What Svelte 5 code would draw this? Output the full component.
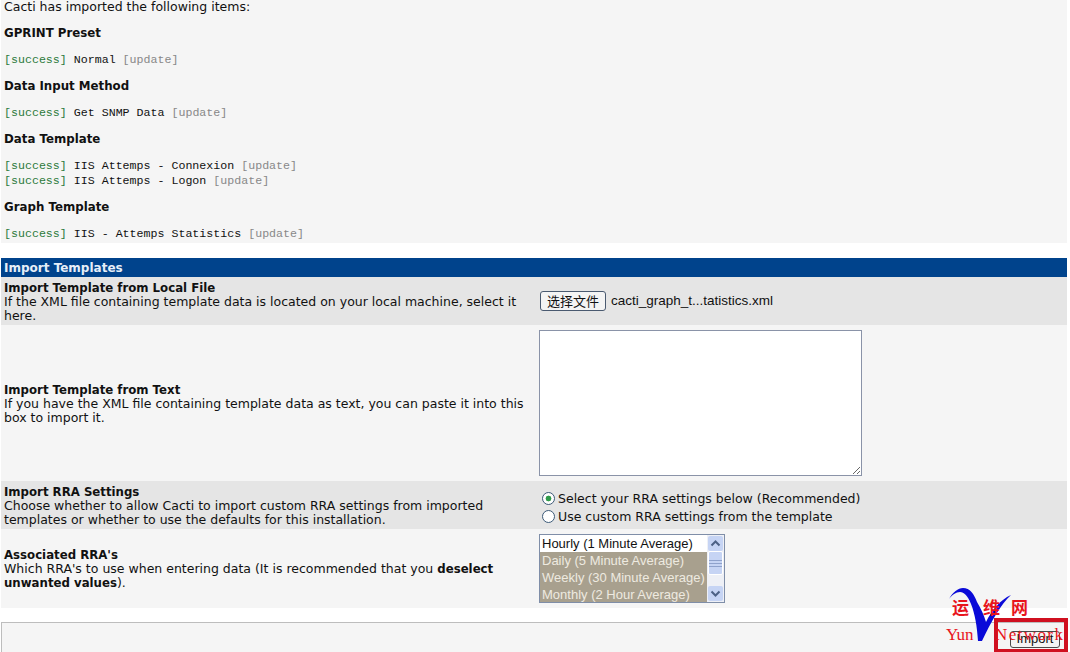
<script>
  const imported = [
    { title: 'GPRINT Preset', items: ['Normal'] },
    { title: 'Data Input Method', items: ['Get SNMP Data'] },
    { title: 'Data Template', items: ['IIS Attemps - Connexion', 'IIS Attemps - Logon'] },
    { title: 'Graph Template', items: ['IIS - Attemps Statistics'] }
  ]

  const rras = [
    { name: 'Hourly (1 Minute Average)', selected: false },
    { name: 'Daily (5 Minute Average)', selected: true },
    { name: 'Weekly (30 Minute Average)', selected: true },
    { name: 'Monthly (2 Hour Average)', selected: true }
  ]
</script>

<main class="page">
  <section class="results">
    <p class="intro">Cacti has imported the following items:</p>
    {#each imported as group}
      <h3>{group.title}</h3>
      <div class="log">
        {#each group.items as item}
          <div><span class="ok">[success]</span> {item} <span class="upd">[update]</span></div>
        {/each}
      </div>
    {/each}
  </section>

  <section class="form">
    <div class="header">Import Templates</div>

    <div class="row alt file-row">
      <div class="label shifted">
        <strong>Import Template from Local File</strong><br />
        If the XML file containing template data is located on your local machine, select it here.
      </div>
      <div class="field file">
        <button type="button" class="pick">选择文件</button>
        <span>cacti_graph_t...tatistics.xml</span>
      </div>
    </div>

    <div class="row text-row">
      <div class="label shifted">
        <strong>Import Template from Text</strong><br />
        If you have the XML file containing template data as text, you can paste it into this box to import it.
      </div>
      <div class="field">
        <textarea></textarea>
      </div>
    </div>

    <div class="row alt rra-row">
      <div class="label shifted">
        <strong>Import RRA Settings</strong><br />
        Choose whether to allow Cacti to import custom RRA settings from imported templates or whether to use the defaults for this installation.
      </div>
      <div class="field radios">
        <label><input type="radio" name="rra" checked />Select your RRA settings below (Recommended)</label>
        <label><input type="radio" name="rra" />Use custom RRA settings from the template</label>
      </div>
    </div>

    <div class="row assoc-row">
      <div class="label">
        <strong>Associated RRA's</strong><br />
        Which RRA's to use when entering data (It is recommended that you <strong>deselect unwanted values</strong>).
      </div>
      <div class="field">
        <div class="listbox">
          <div class="options">
            {#each rras as rra}
              <div class="option" class:selected={rra.selected}>{rra.name}</div>
            {/each}
          </div>
          <div class="scrollbar">
            <div class="arrow">
              <svg width="15" height="15" viewBox="0 0 15 15"><path d="M3.5 9.5 7.5 5.5 11.5 9.5" fill="none" stroke="#4d6185" stroke-width="2" /></svg>
            </div>
            <div class="track"><div class="thumb"></div></div>
            <div class="arrow">
              <svg width="15" height="15" viewBox="0 0 15 15"><path d="M3.5 5.5 7.5 9.5 11.5 5.5" fill="none" stroke="#4d6185" stroke-width="2" /></svg>
            </div>
          </div>
        </div>
      </div>
    </div>
  </section>

  <div class="actions">
    <button type="button" class="import">Import</button>
  </div>

  <div class="highlight"></div>

  <div class="watermark">
    <svg class="vee" width="70" height="60" viewBox="0 0 70 60">
      <path d="M1 13C5 6 10 2 15 2 22 2 26 8 29 16 33 23 36 29 38 36 44 24 52 14 63 9 53 18 43 36 34 55L30 55C29 40 27 28 23 18 20 10 16 6 12 6 8 6 4 9 1 13Z" fill="#0a0ad8" />
    </svg>
    <span class="cn c1">运</span>
    <span class="cn c2">维</span>
    <span class="cn c3">网</span>
    <span class="en e1">Yun</span>
    <span class="en e2">Network</span>
  </div>
</main>

<style>
  :global(body) {
    margin: 0;
    background: #fff;
  }

  .page {
    position: relative;
    width: 1070px;
    height: 652px;
    overflow: hidden;
    box-sizing: border-box;
    padding: 0 3px 0 1px;
    font-family: "DejaVu Sans", Verdana, sans-serif;
    font-size: 12.5px;
    line-height: 14px;
    color: #111;
  }

  strong {
    font-size: 11.75px;
  }

  .results {
    height: 243px;
    background: #f5f5f5;
    padding: 0 3px;
    overflow: hidden;
  }

  .intro {
    margin: 0;
    line-height: 14px;
  }

  h3 {
    margin: 12px 0 12px;
    font-size: 11.8px;
    line-height: 14px;
    font-weight: bold;
  }

  .log {
    font-family: "Liberation Mono", "Courier New", monospace;
    font-size: 11.64px;
    line-height: 15px;
    margin-bottom: 10px;
  }

  .ok {
    color: #2c7a3c;
  }

  .upd {
    color: #888;
  }

  .form {
    margin-top: 15px;
  }

  .header {
    box-sizing: border-box;
    height: 19px;
    padding: 1px 0 0 3px;
    line-height: 19px;
    background: #00438c;
    color: #e6eef8;
    font-size: 12px;
    font-weight: bold;
  }

  .row {
    display: grid;
    grid-template-columns: 538px 1fr;
    align-items: center;
    background: #f5f5f5;
  }

  .row.alt {
    background: #e5e5e5;
  }

  .file-row {
    height: 48px;
  }

  .text-row {
    height: 156px;
  }

  .rra-row {
    height: 48px;
  }

  .assoc-row {
    height: 79px;
  }

  .label {
    padding: 0 3px;
  }

  .label.shifted {
    padding-top: 2px;
  }

  .file {
    display: flex;
    align-items: center;
    gap: 5px;
    font-family: "Liberation Sans", Arial, sans-serif;
    font-size: 13.5px;
    padding-left: 1px;
  }

  .pick {
    width: 66px;
    height: 20px;
    padding: 0;
    background: #f4f4f4;
    border: 1px solid #4a5a70;
    border-radius: 3px;
    font-family: "Noto Sans CJK SC", sans-serif;
    font-size: 13px;
    line-height: 16px;
    color: #111;
  }

  textarea {
    display: block;
    box-sizing: border-box;
    width: 323px;
    height: 146px;
    margin: 0;
    background: #fff;
    border: 1px solid #8a93a8;
  }

  .radios {
    padding-top: 6px;
  }

  .radios label {
    display: flex;
    align-items: center;
    height: 18px;
    padding-left: 3px;
    font-size: 12.5px;
  }

  .radios input {
    appearance: none;
    box-sizing: border-box;
    width: 13px;
    height: 13px;
    margin: 0 3px 2px 0;
    background: #fff;
    border: 1px solid #3c5a78;
    border-radius: 50%;
  }

  .radios input:checked {
    background: radial-gradient(circle, #2f9a4a 0 2.6px, #fff 3.2px);
  }

  .listbox {
    display: flex;
    box-sizing: border-box;
    width: 186px;
    height: 69px;
    border: 1px solid #7f8ea8;
    background: #fff;
  }

  .options {
    flex: 1;
    font-family: "Liberation Sans", Arial, sans-serif;
    font-size: 13px;
    overflow: hidden;
  }

  .option {
    height: 17px;
    line-height: 17px;
    padding-left: 2px;
    white-space: nowrap;
  }

  .option.selected {
    background: #a8a08e;
    color: #eeeae0;
  }

  .scrollbar {
    display: flex;
    flex-direction: column;
    width: 17px;
    padding: 1px;
    box-sizing: border-box;
    background: #eef0f6;
  }

  .arrow {
    height: 15px;
    background: #c6d4f4;
    border-radius: 2px;
  }

  .track {
    flex: 1;
  }

  .thumb {
    height: 24px;
    background: linear-gradient(#c6d4f4 0 8px, #8fa2cc 8px 9px, #c6d4f4 9px 11px, #8fa2cc 11px 12px, #c6d4f4 12px 14px, #8fa2cc 14px 15px, #c6d4f4 15px);
    border: 1px solid #fff;
    border-radius: 2px;
    box-sizing: border-box;
  }

  .actions {
    display: flex;
    justify-content: flex-end;
    align-items: center;
    box-sizing: border-box;
    height: 30px;
    margin-top: 14px;
    padding: 3px 6px 0 0;
    background: #f5f5f5;
    border: 1px solid #bdbdbd;
    border-bottom: 0;
  }

  .import {
    width: 50px;
    height: 17px;
    padding: 0;
    background: #f4f4f4;
    border: 1px solid #4a4a4a;
    border-radius: 3px;
    font-family: "Liberation Sans", Arial, sans-serif;
    font-size: 13px;
    line-height: 14px;
    color: #111;
  }

  .highlight {
    position: absolute;
    left: 994px;
    top: 618px;
    width: 74px;
    height: 34px;
    box-sizing: border-box;
    border: 4px solid #d01020;
    border-bottom-width: 3px;
  }

  .watermark {
    position: absolute;
    left: 940px;
    top: 585px;
    width: 130px;
    height: 67px;
    font-family: "Liberation Serif", "Noto Sans CJK SC", serif;
    color: #e8141c;
  }

  .vee {
    position: absolute;
    left: 8px;
    top: 1px;
  }

  .cn {
    position: absolute;
    top: 12px;
    font-family: "Noto Sans CJK SC", sans-serif;
    font-size: 17px;
    font-weight: 700;
    line-height: 20px;
  }

  .c1 {
    left: 12px;
  }

  .c2 {
    left: 43px;
  }

  .c3 {
    left: 71px;
  }

  .en {
    position: absolute;
    top: 40px;
    font-size: 17px;
    line-height: 20px;
  }

  .e1 {
    left: 6px;
  }

  .e2 {
    left: 55px;
    letter-spacing: 1.4px;
  }
</style>
